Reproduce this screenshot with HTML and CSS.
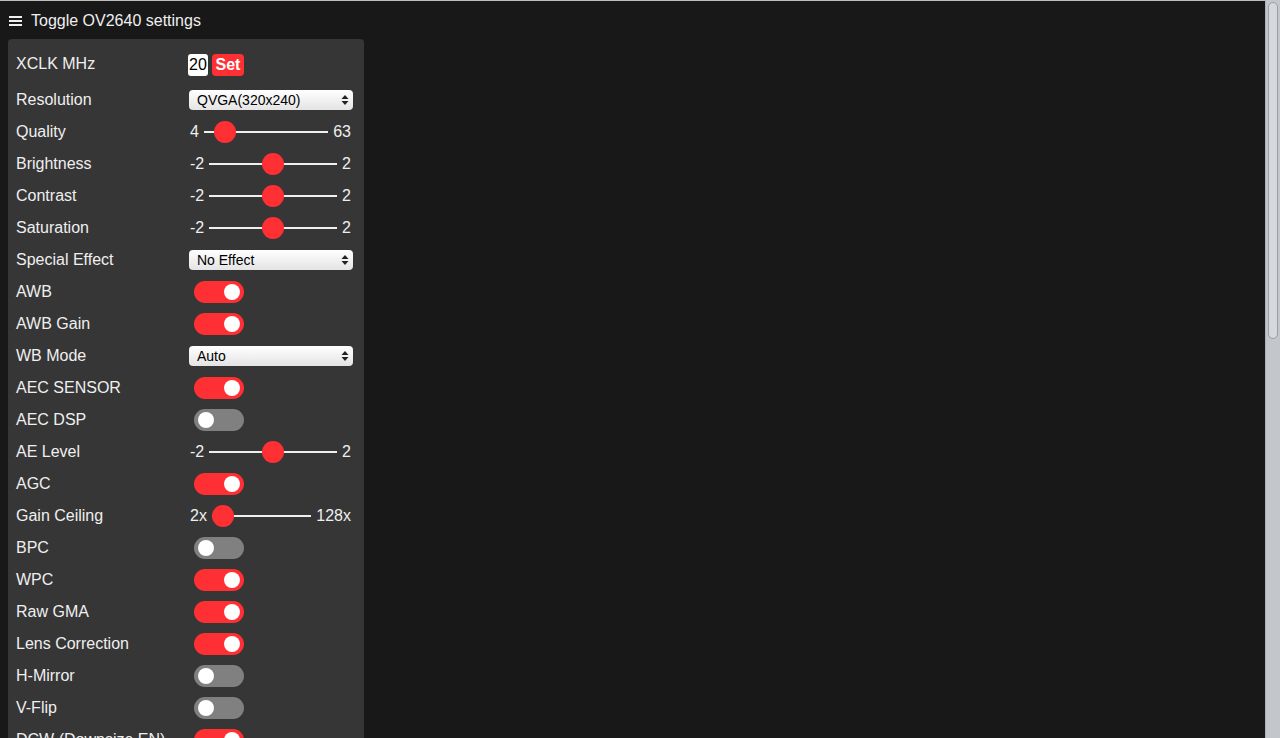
FILE: index.html
```html
<!DOCTYPE html>
<html lang="en">
<head>
    <meta charset="UTF-8">
    <meta name="viewport" content="width=device-width, initial-scale=1.0">
    <title>ESP32 OV2640</title>
    <link rel="stylesheet" href="styles.css">
</head>
<body>
    <div class="page">
        <main class="main">
            <div class="nav-toggle">
                <svg class="menu-icon" width="13" height="12" viewBox="0 0 13 12">
                    <rect x="0" y="1" width="13" height="2" fill="#efefef"/>
                    <rect x="0" y="5" width="13" height="2" fill="#efefef"/>
                    <rect x="0" y="9" width="13" height="2" fill="#efefef"/>
                </svg>
                <span>Toggle OV2640 settings</span>
            </div>
            <nav id="sidebar">
                <div class="input-group tall">
                    <label>XCLK MHz</label>
                    <div class="text">
                        <input type="text" class="xclk" value="20">
                        <button class="inline-button">Set</button>
                    </div>
                </div>
                <div class="input-group">
                    <label for="framesize">Resolution</label>
                    <select id="framesize">
                        <option>QVGA(320x240)</option>
                    </select>
                </div>
                <div class="input-group">
                    <label for="quality">Quality</label>
                    <div class="range-min">4</div>
                    <input type="range" id="quality" min="4" max="63" value="10">
                    <div class="range-max">63</div>
                </div>
                <div class="input-group">
                    <label for="brightness">Brightness</label>
                    <div class="range-min">-2</div>
                    <input type="range" id="brightness" min="-2" max="2" value="0">
                    <div class="range-max">2</div>
                </div>
                <div class="input-group">
                    <label for="contrast">Contrast</label>
                    <div class="range-min">-2</div>
                    <input type="range" id="contrast" min="-2" max="2" value="0">
                    <div class="range-max">2</div>
                </div>
                <div class="input-group">
                    <label for="saturation">Saturation</label>
                    <div class="range-min">-2</div>
                    <input type="range" id="saturation" min="-2" max="2" value="0">
                    <div class="range-max">2</div>
                </div>
                <div class="input-group">
                    <label for="special_effect">Special Effect</label>
                    <select id="special_effect">
                        <option>No Effect</option>
                    </select>
                </div>
                <div class="input-group">
                    <label>AWB</label>
                    <div class="switch on"></div>
                </div>
                <div class="input-group">
                    <label>AWB Gain</label>
                    <div class="switch on"></div>
                </div>
                <div class="input-group">
                    <label for="wb_mode">WB Mode</label>
                    <select id="wb_mode">
                        <option>Auto</option>
                    </select>
                </div>
                <div class="input-group">
                    <label>AEC SENSOR</label>
                    <div class="switch on"></div>
                </div>
                <div class="input-group">
                    <label>AEC DSP</label>
                    <div class="switch"></div>
                </div>
                <div class="input-group">
                    <label for="ae_level">AE Level</label>
                    <div class="range-min">-2</div>
                    <input type="range" id="ae_level" min="-2" max="2" value="0">
                    <div class="range-max">2</div>
                </div>
                <div class="input-group">
                    <label>AGC</label>
                    <div class="switch on"></div>
                </div>
                <div class="input-group">
                    <label for="gainceiling">Gain Ceiling</label>
                    <div class="range-min">2x</div>
                    <input type="range" id="gainceiling" min="0" max="6" value="0">
                    <div class="range-max">128x</div>
                </div>
                <div class="input-group">
                    <label>BPC</label>
                    <div class="switch"></div>
                </div>
                <div class="input-group">
                    <label>WPC</label>
                    <div class="switch on"></div>
                </div>
                <div class="input-group">
                    <label>Raw GMA</label>
                    <div class="switch on"></div>
                </div>
                <div class="input-group">
                    <label>Lens Correction</label>
                    <div class="switch on"></div>
                </div>
                <div class="input-group">
                    <label>H-Mirror</label>
                    <div class="switch"></div>
                </div>
                <div class="input-group">
                    <label>V-Flip</label>
                    <div class="switch"></div>
                </div>
                <div class="input-group">
                    <label>DCW (Downsize EN)</label>
                    <div class="switch on"></div>
                </div>
            </nav>
        </main>
        <div class="scrollbar">
            <div class="scroll-thumb"></div>
        </div>
    </div>
</body>
</html>
```

FILE: styles.css
```css
body {
    font-family: "Liberation Sans", Arial, Helvetica, sans-serif;
    background: #181818;
    color: #efefef;
    font-size: 16px;
    margin: 0;
    height: 738px;
    overflow: hidden;
}
.page {
    display: flex;
    height: 738px;
}
.main {
    flex: 1;
    border-top: 1px solid #bdbdbd;
    overflow: hidden;
}
.nav-toggle {
    display: flex;
    align-items: center;
    height: 37px;
    padding-top: 1px;
    padding-left: 9px;
    gap: 9px;
    line-height: 22px;
}
.menu-icon {
    display: block;
}
#sidebar {
    width: 340px;
    margin-left: 8px;
    background: #363636;
    padding: 14px 8px 8px;
    border-radius: 4px;
    display: flex;
    flex-direction: column;
    gap: 10px;
}
.input-group {
    display: flex;
    align-items: center;
    height: 22px;
    line-height: 22px;
}
.input-group.tall {
    align-items: flex-start;
    height: 26px;
}
.input-group > label {
    flex: 0 0 173px;
}
.text {
    display: flex;
    gap: 4px;
    margin-top: 1px;
}
.xclk {
    width: 20px;
    height: 22px;
    box-sizing: border-box;
    padding: 0 1px;
    margin-left: -1px;
    border: 0;
    border-radius: 3px;
    font: 16px "Liberation Sans", Arial, sans-serif;
    color: #000;
    background: #fff;
}
.inline-button {
    height: 22px;
    width: 32px;
    padding: 0;
    border: 0;
    border-radius: 4px;
    background: #ff3034;
    color: #fff;
    font: bold 16px "Liberation Sans", Arial, sans-serif;
    line-height: 22px;
}
select {
    flex: 1;
    margin-right: 3px;
    height: 20px;
    border: 0;
    border-radius: 4px;
    font: 14px "Liberation Sans", Arial, sans-serif;
    color: #000;
    padding: 0 0 0 8px;
    appearance: none;
    background-image: url("data:image/svg+xml,%3Csvg xmlns='http://www.w3.org/2000/svg' width='8' height='12'%3E%3Cpath d='M4 1L7.5 5H0.5Z M4 11L7.5 7H0.5Z' fill='%23222'/%3E%3C/svg%3E"), linear-gradient(#ffffff, #e4e4e4);
    background-repeat: no-repeat;
    background-position: right 4px center, 0 0;
}
.range-min {
    padding: 0 5px 0 1px;
}
.range-max {
    padding: 0 5px;
}
input[type=range] {
    -webkit-appearance: none;
    flex: 1;
    min-width: 0;
    height: 22px;
    margin: 0;
    background: #363636;
}
input[type=range]::-webkit-slider-runnable-track {
    height: 2px;
    background: #efefef;
    border: 0;
}
input[type=range]::-webkit-slider-thumb {
    -webkit-appearance: none;
    width: 22px;
    height: 22px;
    border-radius: 50%;
    background: #ff3034;
    margin-top: -10px;
}
.switch {
    position: relative;
    width: 50px;
    height: 22px;
    margin-left: 5px;
    border-radius: 22px;
    background: #808080;
}
.switch::before {
    content: "";
    position: absolute;
    left: 4px;
    top: 3px;
    width: 16px;
    height: 16px;
    border-radius: 50%;
    background: #fff;
}
.switch.on {
    background: #ff3034;
}
.switch.on::before {
    left: 30px;
}
.scrollbar {
    flex: 0 0 15px;
    background: #c3c6cb;
    border-left: 1px solid #aeb1b6;
    box-sizing: border-box;
    padding: 2px 2px 0 2px;
}
.scroll-thumb {
    height: 335px;
    border: 1px solid #9a9ea5;
    border-radius: 5px;
    background: #d5d8dc;
}
```
